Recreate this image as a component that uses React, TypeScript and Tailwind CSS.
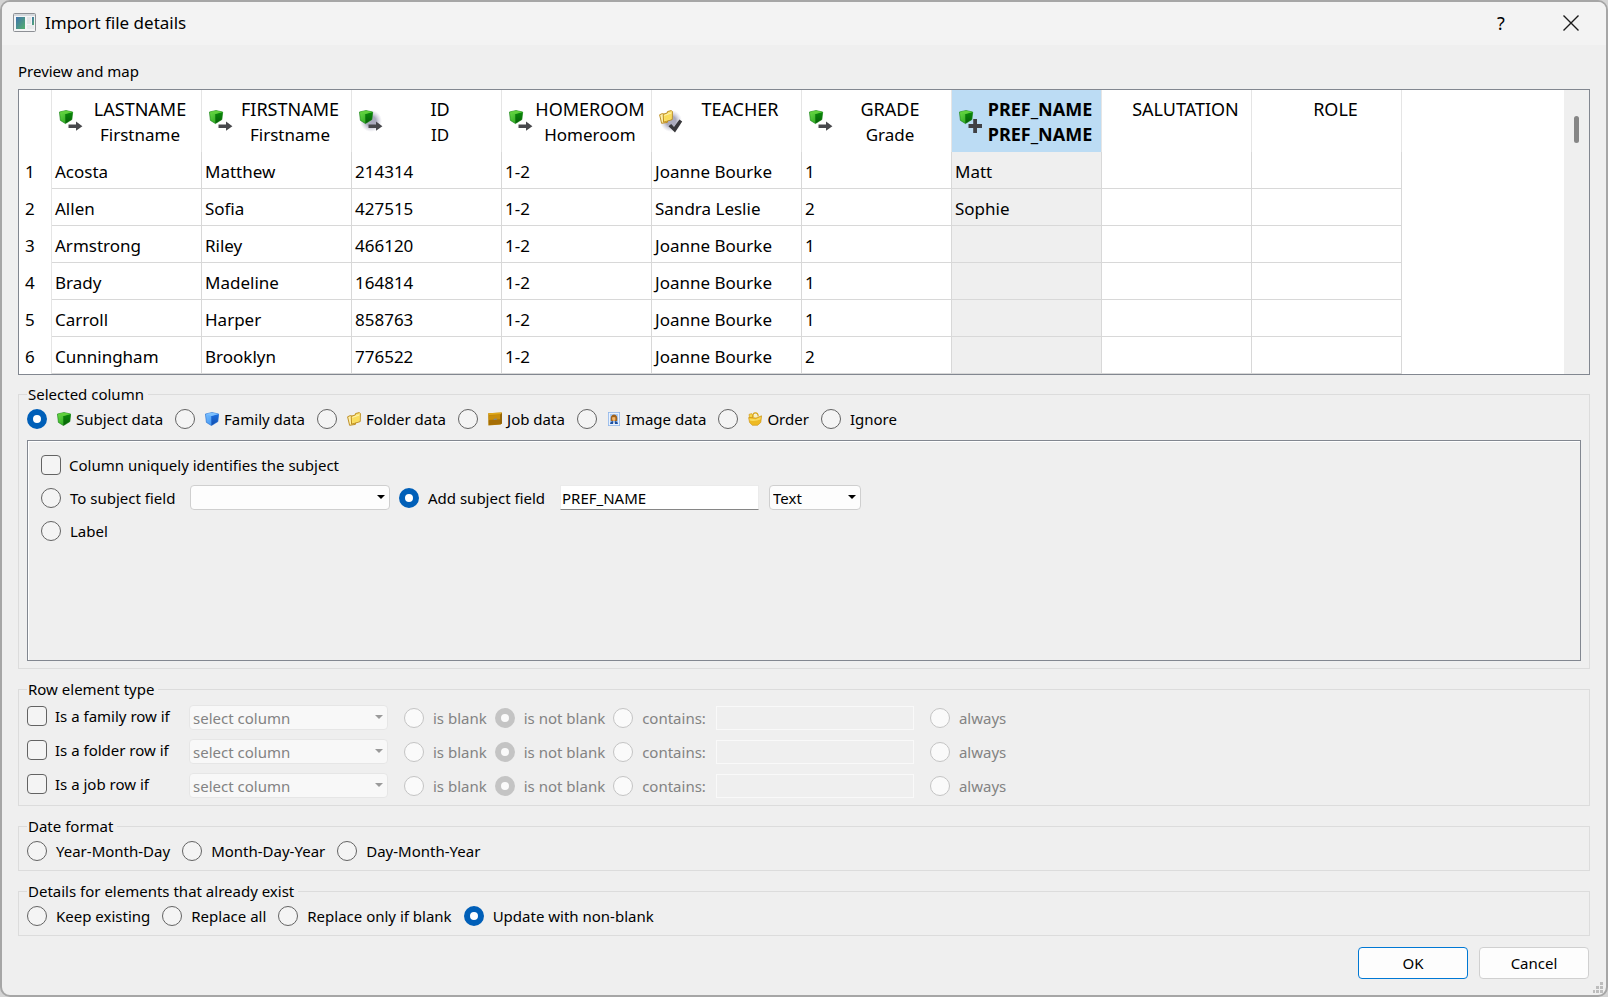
import React from "react";

type MarkKind = "arrow" | "shadowArrow" | "plus" | "check";

type Column = {
  title: string;
  target?: string;
  icon?: MarkKind;
  selected?: boolean;
};

const COLUMNS: Column[] = [
  { title: "LASTNAME", target: "Firstname", icon: "arrow" },
  { title: "FIRSTNAME", target: "Firstname", icon: "arrow" },
  { title: "ID", target: "ID", icon: "shadowArrow" },
  { title: "HOMEROOM", target: "Homeroom", icon: "arrow" },
  { title: "TEACHER", icon: "check" },
  { title: "GRADE", target: "Grade", icon: "arrow" },
  { title: "PREF_NAME", target: "PREF_NAME", icon: "plus", selected: true },
  { title: "SALUTATION" },
  { title: "ROLE" },
];

const ROWS: string[][] = [
  ["Acosta", "Matthew", "214314", "1-2", "Joanne Bourke", "1", "Matt", "", ""],
  ["Allen", "Sofia", "427515", "1-2", "Sandra Leslie", "2", "Sophie", "", ""],
  ["Armstrong", "Riley", "466120", "1-2", "Joanne Bourke", "1", "", "", ""],
  ["Brady", "Madeline", "164814", "1-2", "Joanne Bourke", "1", "", "", ""],
  ["Carroll", "Harper", "858763", "1-2", "Joanne Bourke", "1", "", "", ""],
  ["Cunningham", "Brooklyn", "776522", "1-2", "Joanne Bourke", "2", "", "", ""],
];

/* ---------- icons ---------- */

function Cube({ tone }: { tone: "green" | "blue" }) {
  const c =
    tone === "green"
      ? { top: "#5fd03c", light: "#6fdc4a", left: "#169a14", right: "#0b8a0b", dark: "#076007", edge: "#0f7a0f" }
      : { top: "#7cc0ff", light: "#7ec2ff", left: "#2c86ee", right: "#1c6ee0", dark: "#124fae", edge: "#1f68cc" };
  return (
    <g>
      <defs>
        <linearGradient id={`${tone}-left`} x1="0" y1="0" x2="1" y2="1">
          <stop offset="0" stopColor={c.light} />
          <stop offset="1" stopColor={c.left} />
        </linearGradient>
        <linearGradient id={`${tone}-right`} x1="0" y1="0" x2="0" y2="1">
          <stop offset="0" stopColor={c.right} />
          <stop offset="1" stopColor={c.dark} />
        </linearGradient>
      </defs>
      <path d="M0.4 2 L7 0.5 L13.7 2 L12.9 9.6 L6.4 13.6 L1.4 10.4 Z" fill={`url(#${tone}-left)`} stroke={c.edge} strokeWidth="0.6" strokeLinejoin="round" />
      <path d="M6.2 4 L13.5 2.2 L12.7 9.5 L6.4 13.4 Z" fill={`url(#${tone}-right)`} />
      <path d="M0.8 2.1 L7 0.8 L13.3 2.1 L6.2 4 Z" fill={c.top} />
    </g>
  );
}

function Folders() {
  return (
    <g stroke="#b98512" strokeWidth="0.9" strokeLinejoin="round">
      <path d="M0.6 4.8 L3.2 3.6 L9 5.2 L8.4 12.4 L2.6 13.3 Z" fill="#fdf0b0" />
      <path d="M4.2 4.4 L8.2 3 L8.6 1.5 L12.4 0.6 L13.4 1.6 L13.2 9.6 L4.6 12.2 Z" fill="#fbe476" />
      <path d="M5.4 5.4 L12.4 3 L12.2 8.8 L5.6 10.8 Z" fill="#f9dc5c" stroke="none" />
      <path d="M5.4 5.4 L12.4 3" stroke="#fff6c0" strokeWidth="0.8" />
    </g>
  );
}

function DataIcon({ kind }: { kind: string }) {
  return (
    <svg width="14" height="14" viewBox="0 0 14 14" aria-hidden="true" className="shrink-0">
      {kind === "subject" && <Cube tone="green" />}
      {kind === "family" && <Cube tone="blue" />}
      {kind === "folder" && <Folders />}
      {kind === "job" && (
        <g>
          <path d="M0.2 1.2 L13.8 0.4 L13.8 11.2 L12.6 12.4 L0.4 13.4 Z" fill="#b98207" />
          <path d="M0.2 1.2 L13.8 0.4 L13.4 2.2 L0.8 3 Z" fill="#e0a91e" />
          <path d="M0.8 3.4 L12.2 2.8 L12.2 7 L0.8 7.8 Z" fill="#c98e0d" />
          <path d="M0.8 8.2 L12.4 7.4 L12.2 12.2 L0.8 13 Z" fill="#a66e05" />
          <path d="M12.4 2.8 L13.8 0.8 L13.8 11.2 L12.4 12.4 Z" fill="#8a5a02" />
          <path d="M5.4 7.2 Q7.2 5.8 9.2 6.8 L9 7.6 L6 7.9 Z" fill="#7f8794" />
        </g>
      )}
      {kind === "image" && (
        <g>
          <rect x="1.4" y="0.4" width="11.2" height="13.2" fill="#e9f2fd" stroke="#8fb6ea" strokeWidth="0.8" />
          <rect x="3" y="2" width="8" height="10" fill="#a9cbf6" />
          <path d="M3.8 9 Q3 2.4 7 2.4 Q11 2.4 10.2 9 Z" fill="#a0621c" />
          <path d="M5 5.6 Q7 4.4 8.4 5.4 L8.4 8 Q7 9.8 5.4 8 Z" fill="#f3b76c" />
          <path d="M3 12 Q3.2 9.4 5.6 9 L7 10.4 L8.4 9 Q10.8 9.4 11 12 Z" fill="#1d4fa0" />
          <path d="M6.2 9.6 L7 10.8 L7.8 9.6 L7.8 12 L6.2 12 Z" fill="#ffffff" />
        </g>
      )}
      {kind === "order" && (
        <g strokeLinejoin="round">
          <path d="M1 2.4 L3.6 1.6 L5.2 4 L4.4 6.4 L1.6 5.8 Z" fill="#f8d648" stroke="#c98f0c" strokeWidth="0.6" />
          <path d="M4.8 5 Q4.6 0.8 7.4 0.8 Q10 0.8 10.2 4.4" fill="none" stroke="#d9a514" strokeWidth="1.2" />
          <path d="M0.6 5.6 L4 5.4 L8 6 L13.6 3.8 L12.8 10.4 L9.6 13.3 L4.4 13.3 L1.6 10.6 Z" fill="#eeba24" stroke="#c98f0c" strokeWidth="0.6" />
          <path d="M1.4 6.6 L7.6 7.2 L12.8 5 L12.4 7.6 Q7 10 1.8 8.4 Z" fill="#f8da5c" />
          <path d="M5.8 3.6 Q7.4 1.8 9.2 3.4 L8.8 5 L6.2 5 Z" fill="#fdf3b4" />
        </g>
      )}
    </svg>
  );
}

function HeaderIcon({ kind }: { kind: MarkKind }) {
  const hasShadow = kind === "shadowArrow" || kind === "check";
  return (
    <svg width="24" height="24" viewBox="0 0 24 24" aria-hidden="true" className="shrink-0">
      {hasShadow && (
        <>
          <defs>
            <radialGradient id={`halo-${kind}`}>
              <stop offset="0.45" stopColor="#8f8fa8" stopOpacity="0.75" />
              <stop offset="1" stopColor="#b8b8cc" stopOpacity="0" />
            </radialGradient>
          </defs>
          <circle cx="12" cy="12" r="11" fill={`url(#halo-${kind})`} />
        </>
      )}
      <g transform="translate(0 1)">{kind === "check" ? <Folders /> : <Cube tone="green" />}</g>
      {(kind === "arrow" || kind === "shadowArrow") && (
        <path d="M9.5 15.4 H17 V12.6 L23.4 17.2 L17 21.8 V19 H9.5 Z" fill="#48484c" />
      )}
      {kind === "plus" && <path d="M14.2 10 H18 V15 H23 V19 H18 V24 H14.2 V19 H9.5 V15 H14.2 Z" fill="#404044" />}
      {kind === "check" && <path d="M9.5 17.2 L12.2 15 L15 18 L20.4 10.6 L23.2 12.4 L16 23.4 Z" fill="#38383c" />}
    </svg>
  );
}

function AppIcon() {
  return (
    <svg width="23" height="19" viewBox="0 0 23 19" aria-hidden="true">
      <defs>
        <linearGradient id="pane" x1="0" y1="0" x2="1" y2="1">
          <stop offset="0" stopColor="#3f72ae" />
          <stop offset="1" stopColor="#55b06c" />
        </linearGradient>
      </defs>
      <rect x="0.5" y="0.5" width="22" height="18" rx="1" fill="#f4f5f6" stroke="#8d9095" />
      <rect x="1" y="1" width="21" height="2" fill="#d5d9dd" />
      <rect x="3" y="4" width="9" height="12" fill="url(#pane)" />
      <rect x="14" y="4" width="4" height="7" fill="#e3e5e7" />
      <rect x="19" y="4" width="2" height="8" fill="url(#pane)" />
      <rect x="14" y="12" width="7" height="4" fill="#e8eaec" />
    </svg>
  );
}

/* ---------- controls ---------- */

type RadioProps = {
  name: string;
  label: string;
  icon?: string;
  checked?: boolean;
  disabled?: boolean;
};

function Radio({ name, label, icon, checked, disabled }: RadioProps) {
  return (
    <label className={`flex items-center ${disabled ? "text-[#838383]" : ""}`}>
      <input
        type="radio"
        name={name}
        defaultChecked={checked}
        disabled={disabled}
        className="size-5 shrink-0 appearance-none rounded-full border border-[#636363] bg-[#f4f4f4] checked:border-[6px] checked:border-[#005fb8] checked:bg-white disabled:border-[#c4c4c4] disabled:bg-[#fafafa]"
      />
      <span className={`flex items-center gap-[5px] ${icon ? "ml-[10px]" : "ml-[9px]"}`}>
        {icon && <DataIcon kind={icon} />}
        <span className="whitespace-nowrap">{label}</span>
      </span>
    </label>
  );
}

function Checkbox({ label }: { label: string }) {
  return (
    <label className="flex items-center gap-2">
      <input
        type="checkbox"
        className="size-5 shrink-0 appearance-none rounded-[4px] border border-[#636363] bg-[#f4f4f4] checked:bg-[#005fb8]"
      />
      <span className="whitespace-nowrap">{label}</span>
    </label>
  );
}

type ComboProps = {
  label: string;
  options: string[];
  width: string;
  disabled?: boolean;
};

function Combo({ label, options, width, disabled }: ComboProps) {
  return (
    <div className={`relative shrink-0 ${width}`}>
      <select
        aria-label={label}
        disabled={disabled}
        className="block h-[25px] w-full appearance-none rounded-[4px] border border-[#cfcfcf] bg-[#fdfdfd] pl-[3px] disabled:border-[#e6e6e6] disabled:bg-[#f8f8f8] disabled:text-[#838383] disabled:opacity-100"
      >
        {options.map((o) => (
          <option key={o}>{o}</option>
        ))}
      </select>
      <svg
        width="8"
        height="4"
        viewBox="0 0 8 4"
        aria-hidden="true"
        className={`pointer-events-none absolute top-[10px] right-[5px] ${disabled ? "text-[#9a9a9a]" : "text-black"}`}
      >
        <path d="M0 0 H8 L4 4 Z" fill="currentColor" />
      </svg>
    </div>
  );
}

function Group({ title, className = "", children }: { title: string; className?: string; children: React.ReactNode }) {
  return (
    <fieldset className={`min-w-0 border border-[#dcdcdc] px-2 ${className}`}>
      <legend className="pr-1 pl-px leading-5">{title}</legend>
      {children}
    </fieldset>
  );
}

function RowRule({ kind }: { kind: string }) {
  const name = `rule-${kind}`;
  return (
    <div className="flex h-[25px] items-center">
      <div className="w-[162px] self-start pt-px">
        <Checkbox label={`Is a ${kind} row if`} />
      </div>
      <Combo label={`Column for ${kind} row`} options={["select column"]} width="w-[199px]" disabled />
      <div className="ml-4 flex items-center gap-2">
        <Radio name={name} label="is blank" disabled />
        <Radio name={name} label="is not blank" checked disabled />
        <Radio name={name} label="contains:" disabled />
      </div>
      <input
        type="text"
        aria-label={`Text contained in ${kind} row`}
        disabled
        className="mr-4 ml-[10px] h-6 w-[198px] border border-[#f9f9f9] bg-[#efefef]"
      />
      <Radio name={name} label="always" disabled />
    </div>
  );
}

function PreviewTable() {
  return (
    <div className="flex justify-between border border-[#828790] bg-white">
      <table className="table-fixed border-separate border-spacing-0 text-[17px] leading-[25px]">
        <thead>
          <tr className="h-[62px]">
            <th className="w-[33px] border-r border-[#e5e5e5] p-0" />
            {COLUMNS.map((col) => (
              <th
                key={col.title}
                scope="col"
                className={`w-[150px] border-r border-[#e5e5e5] p-0 align-top ${col.selected ? "bg-[#bcdcf4] font-bold" : "font-normal"}`}
              >
                <div className={`flex ${col.icon ? "pl-[7px]" : "pl-[18px]"}`}>
                  {col.icon && (
                    <div className="flex h-[62px] w-[20px] items-center">
                      <HeaderIcon kind={col.icon} />
                    </div>
                  )}
                  <div className="min-w-0 flex-1 pt-[7px] text-center">
                    <div className="text-[18px]">{col.title}</div>
                    <div className={col.selected ? "text-[18px]" : ""}>{col.target}</div>
                  </div>
                </div>
              </th>
            ))}
          </tr>
        </thead>
        <tbody>
          {ROWS.map((row, i) => (
            <tr key={row[0]} className="h-[37px]">
              <th scope="row" className="border-r border-[#e5e5e5] p-0 pt-px pl-[6px] text-left font-normal">
                {i + 1}
              </th>
              {row.map((cell, j) => (
                <td
                  key={COLUMNS[j].title}
                  className={`border-r border-b border-[#d8d8d8] p-0 pt-[2px] pl-[3px] ${COLUMNS[j].selected ? "bg-[#efefef]" : ""}`}
                >
                  {cell}
                </td>
              ))}
            </tr>
          ))}
        </tbody>
      </table>
      <div className="flex w-[25px] justify-center bg-[#efefef] pt-[26px]">
        <div className="h-[27px] w-[5px] rounded-full bg-[#868686]" />
      </div>
    </div>
  );
}

export default function App() {
  return (
    <div className="min-h-screen bg-[#d4d4d4] font-['Noto_Sans',sans-serif] text-[15px] leading-5 text-black">
      <div className="flex min-h-screen flex-col overflow-hidden rounded-[10px] border-2 border-[#a6a6a6] bg-[#efefef]">
        <header className="flex h-[43px] items-center bg-[#f3f3f3] pb-[2px] pl-[11px]">
          <AppIcon />
          <h1 className="ml-[9px] flex-1 text-[17px]">Import file details</h1>
          <button type="button" aria-label="Help" className="w-[70px] text-[18px]">
            ?
          </button>
          <button type="button" aria-label="Close" className="flex w-[70px] justify-center">
            <svg width="16" height="16" viewBox="0 0 16 16" aria-hidden="true">
              <path d="M0.5 0.5 L15.5 15.5 M15.5 0.5 L0.5 15.5" stroke="#1a1a1a" strokeWidth="1.4" />
            </svg>
          </button>
        </header>

        <main className="relative flex flex-1 flex-col px-4 pt-[14px] pb-4">
          <h2 className="mb-[6px] leading-6">Preview and map</h2>
          <PreviewTable />

          <Group title="Selected column" className="mt-[9px] flex-1 pb-[7px]">
            <div className="flex items-center gap-3 pt-[5px]">
              <Radio name="data" label="Subject data" icon="subject" checked />
              <Radio name="data" label="Family data" icon="family" />
              <Radio name="data" label="Folder data" icon="folder" />
              <Radio name="data" label="Job data" icon="job" />
              <Radio name="data" label="Image data" icon="image" />
              <Radio name="data" label="Order" icon="order" />
              <Radio name="data" label="Ignore" />
            </div>
            <div className="mt-[11px] min-h-[221px] border border-[#828790] px-[13px] pt-[11px] shadow-[inset_1px_1px_0_#ffffff]">
              <div className="flex h-[25px] items-center">
                <Checkbox label="Column uniquely identifies the subject" />
              </div>
              <div className="mt-2 flex h-[25px] items-center">
                <div className="w-[149px]">
                  <Radio name="mapping" label="To subject field" />
                </div>
                <Combo label="Subject field" options={[""]} width="w-[200px]" />
                <div className="ml-[9px] w-[161px]">
                  <Radio name="mapping" label="Add subject field" checked />
                </div>
                <input
                  type="text"
                  aria-label="New subject field name"
                  defaultValue="PREF_NAME"
                  className="mr-[10px] h-[25px] w-[199px] border border-[#ebebeb] border-b-[#868686] bg-white px-px"
                />
                <Combo label="Field type" options={["Text"]} width="w-[92px]" />
              </div>
              <div className="mt-2 flex h-[25px] items-center">
                <Radio name="mapping" label="Label" />
              </div>
            </div>
          </Group>

          <Group title="Row element type" className="mt-[10px] pt-[6px] pb-[7px]">
            <div className="flex flex-col gap-[9px]">
              <RowRule kind="family" />
              <RowRule kind="folder" />
              <RowRule kind="job" />
            </div>
          </Group>

          <Group title="Date format" className="mt-[10px] pb-[9px]">
            <div className="flex items-center gap-3 pt-[5px]">
              <Radio name="date" label="Year-Month-Day" />
              <Radio name="date" label="Month-Day-Year" />
              <Radio name="date" label="Day-Month-Year" />
            </div>
          </Group>

          <Group title="Details for elements that already exist" className="mt-[10px] pb-[9px]">
            <div className="flex items-center gap-3 pt-[5px]">
              <Radio name="existing" label="Keep existing" />
              <Radio name="existing" label="Replace all" />
              <Radio name="existing" label="Replace only if blank" />
              <Radio name="existing" label="Update with non-blank" checked />
            </div>
          </Group>

          <div className="mt-[11px] flex justify-end gap-[11px] pr-px">
            <button type="button" className="h-8 w-[110px] rounded-[4px] border border-[#0078d4] bg-[#fdfdfd]">
              OK
            </button>
            <button type="button" className="h-8 w-[110px] rounded-[4px] border border-[#d0d0d0] bg-[#fdfdfd]">
              Cancel
            </button>
          </div>

          <svg width="12" height="12" viewBox="0 0 12 12" aria-hidden="true" className="absolute right-px bottom-px">
            <path d="M7 0h3v3h-3z M3 4h3v3h-3z M7 4h3v3h-3z M0 8h2v3h-2z M3 8h3v3h-3z M7 8h3v3h-3z" fill="#bdbdbd" />
          </svg>
        </main>
      </div>
    </div>
  );
}
